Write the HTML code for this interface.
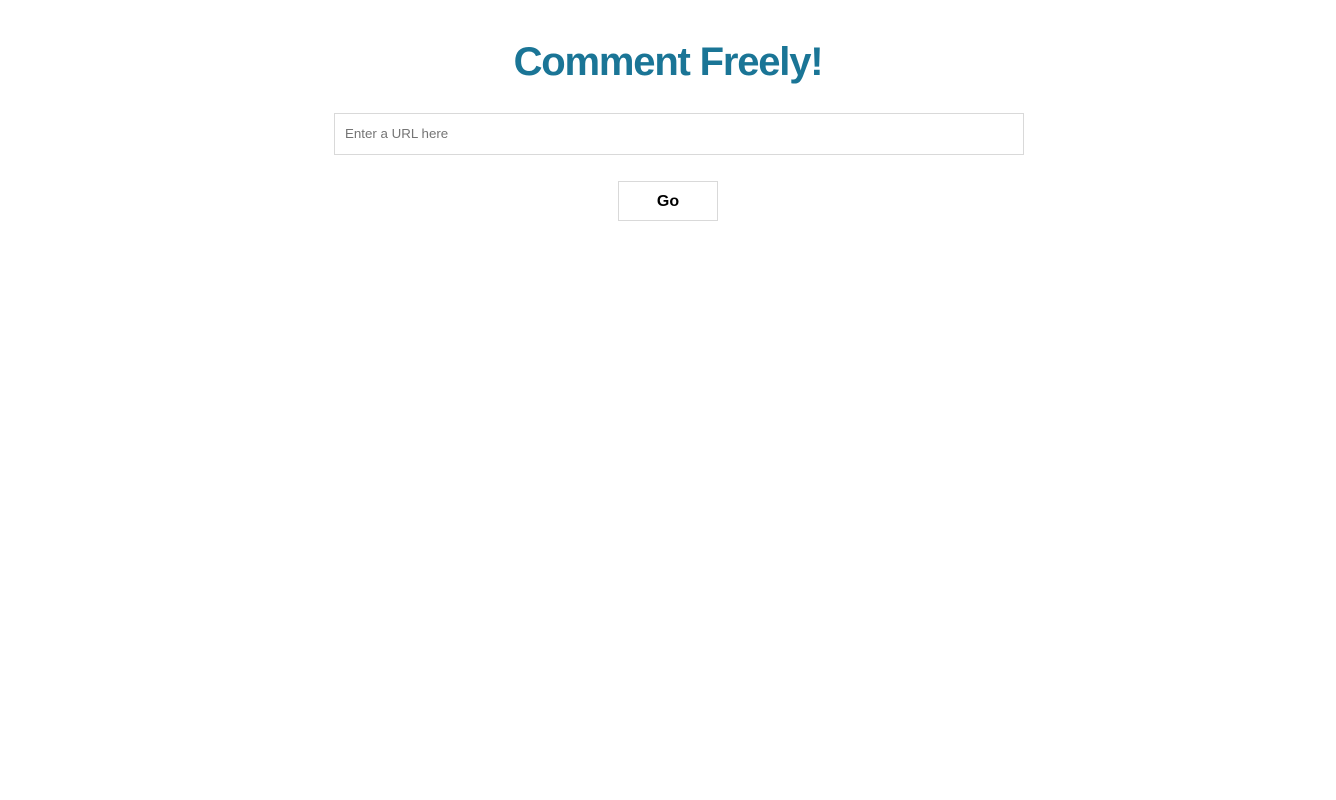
<!DOCTYPE html>
<html><head><style>
html,body{margin:0;background:#fff;width:1336px;height:800px;overflow:hidden}
h1{position:absolute;top:36px;left:0;width:1336px;margin:0;text-align:center;font:bold 40px/52px "Liberation Sans",sans-serif;color:#1a7596;letter-spacing:-1.2px}
.inp{position:absolute;left:334px;top:113px;width:688px;height:40px;border:1px solid #d9d9d9;font:13.33px/40px "Liberation Sans",sans-serif;color:#757575;box-sizing:content-box}
.inp span{margin-left:10px}
.btn{position:absolute;left:618px;top:181px;width:98px;height:38px;border:1px solid #d9d9d9;text-align:center;font:bold 16px/40px "Liberation Sans",sans-serif;color:#000}
</style></head><body>
<h1>Comment Freely!</h1>
<div class="inp"><span>Enter a URL here</span></div>
<div class="btn">Go</div>
</body></html>
